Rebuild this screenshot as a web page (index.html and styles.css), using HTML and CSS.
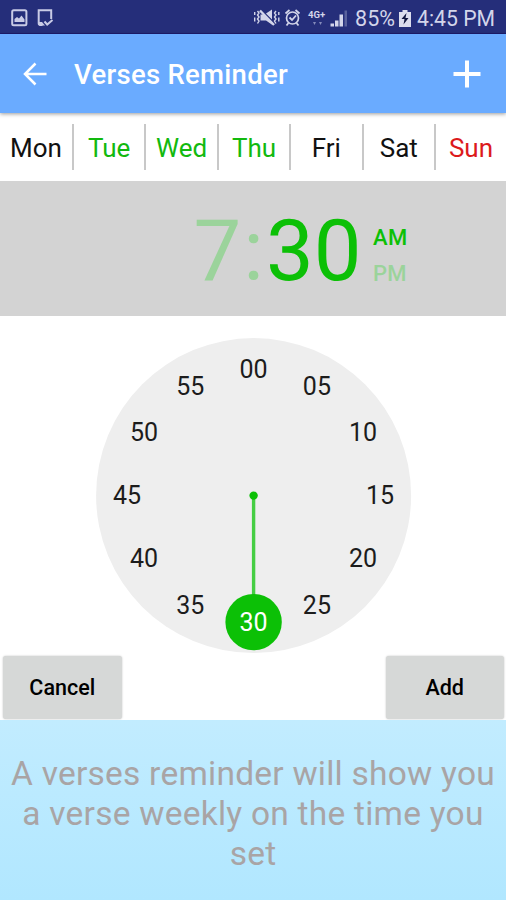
FILE: index.html
```html
<!DOCTYPE html>
<html lang="en">
<head>
<meta charset="utf-8">
<title>Verses Reminder</title>
<link rel="stylesheet" href="styles.css">
</head>
<body>
<div class="screen">
  <div class="status">
    <svg class="status-left" width="60" height="34" viewBox="0 0 60 34">
      <rect x="12.2" y="10.2" width="14.2" height="15" rx="1.5" fill="none" stroke="#c9cbe6" stroke-width="2"/>
      <path d="M14.5 22v-3l2.500-2 2 1.500 2.500-3 3 4V22z" fill="#c9cbe6"/>
      <path d="M42.500 25H40.200a1.500 1.500 0 0 1-1.500-1.500V10.200h12.500V19M44.500 21.500l2.700 3 5.300-4.500" fill="none" stroke="#c9cbe6" stroke-width="2"/>
      <path d="M39 22h3l3 3.500h-6z" fill="#c9cbe6"/>
    </svg>
    <div class="status-right">
      <svg width="104" height="34" viewBox="0 0 104 34">
        <g fill="none" stroke="#d3d5ea" stroke-width="1.400">
          <path d="M6.500 11l1.500 2-1.500 2 1.500 2-1.500 2 1.500 2-1.500 2.500M3.700 12v3M3.700 17.500v4M25 11l-1.500 2 1.500 2-1.500 2 1.500 2-1.500 2 1.500 2.500M27.800 12v3M27.800 17.500v4"/>
          <path d="M9 10.500L23 25" stroke-width="2.400"/>
          <circle cx="41.500" cy="18" r="6" stroke-width="1.700"/>
          <path d="M38.500 17.500l2.500 2.500 4-4.500M34.500 13.500l4-3.500M48.500 13.500l-4-3.500M37.500 23l-2 2.500M45.500 23l2 2.500" stroke-width="1.800"/>
        </g>
        <path d="M9.500 14.500h4l8 8v2.500l-6.500-4.500H9.500zM15 13.500l6-4v10z" fill="#d3d5ea"/>
        <text class="network" x="57" y="17.500">4G+</text>
        <path d="M62 22h3l-1.500 3zM68 22h3l-1.500 3z" fill="#858bbb"/>
        <path d="M79.500 26.500v-3h3.500v3zM84 26.500v-6h3.500v6zM88.500 26.500V14.500h3.500v12z" fill="#d3d5ea"/>
        <path d="M93.500 26.500V10.500h2.500v16z" fill="#59619c"/>
      </svg>
      <span class="battery-text">85%</span>
      <svg class="battery" width="12" height="17" viewBox="0 0 12 17">
        <path d="M3.500 0h5v2H12v15H0V2h3.500z" fill="#dcdded"/>
        <path d="M7.500 3L2.500 9h3l-1 5.500L9.500 8h-3z" fill="#11163f"/>
      </svg>
      <span class="clock-text">4:45 PM</span>
    </div>
  </div>

  <header class="bar">
    <svg class="back" width="24" height="24" viewBox="0 0 24 24"><path d="M23.500 12H2M12.500 1.500L2 12l10.500 10.500" fill="none" stroke="#fff" stroke-width="2.500"/></svg>
    <h1 class="title">Verses Reminder</h1>
    <svg class="plus" width="28" height="28" viewBox="0 0 28 28"><path d="M14 .5v27M.5 14h27" stroke="#fff" stroke-width="4"/></svg>
  </header>

  <nav class="days">
    <span class="day">Mon</span>
    <span class="day on">Tue</span>
    <span class="day on">Wed</span>
    <span class="day on">Thu</span>
    <span class="day">Fri</span>
    <span class="day">Sat</span>
    <span class="day sun">Sun</span>
  </nav>

  <section class="time">
    <span class="digits faded">7</span><span class="digits colon faded">:</span><span class="digits">30</span>
    <div class="ampm"><span>AM</span><span class="faded">PM</span></div>
  </section>

  <main class="dial">
    <svg width="317" height="317" viewBox="-.6 -.6 317 317">
      <circle cx="158" cy="158" r="157.500" fill="#eee"/>
      <path d="M158 158v110" stroke="#45ce43" stroke-width="3.400"/>
      <circle cx="158" cy="158" r="4.200" fill="#0cc006"/>
      <circle cx="158" cy="284.500" r="28.200" fill="#0cc006"/>
      <g class="numbers">
        <text x="158" y="40">00</text>
        <text x="221.300" y="57">05</text>
        <text x="267.500" y="103.300">10</text>
        <text x="284.500" y="166.500">15</text>
        <text x="267.500" y="229.800">20</text>
        <text x="221.300" y="276">25</text>
        <text x="158" y="293" class="selected">30</text>
        <text x="94.700" y="276">35</text>
        <text x="48.500" y="229.800">40</text>
        <text x="31.500" y="166.500">45</text>
        <text x="48.500" y="103.300">50</text>
        <text x="94.700" y="57">55</text>
      </g>
    </svg>
  </main>

  <div class="actions">
    <button class="btn">Cancel</button>
    <button class="btn">Add</button>
  </div>

  <p class="hint">A verses reminder will show you a verse weekly on the time you set</p>
</div>
</body>
</html>
```
FILE: styles.css
```css
* { box-sizing: border-box; }
body { margin: 0; background: #fff; font-family: Roboto, "Liberation Sans", sans-serif; }
.screen { width: 506px; height: 900px; display: flex; flex-direction: column; overflow: hidden; }

.status { height: 34px; flex: none; display: flex; justify-content: space-between; background: #252e7a; border-bottom: 1px solid #1d1c70; color: #d3d5ea; }
.status-right { display: flex; align-items: center; padding-right: 11px; font-size: 21.500px; line-height: 34px; white-space: nowrap; padding-top: 4px; }
.status-right > svg:first-child { margin-top: -3px; }
.network { font: bold 9.500px Roboto, sans-serif; fill: #d3d5ea; }
.battery { margin: 0 6px 0 4px; }
.clock-text { font-size: 21.200px; }

.bar { height: 79px; flex: none; display: flex; align-items: center; background: #6aabff; box-shadow: 0 1px 4px rgba(0, 0, 0, .4); padding: 0 25px 0 22.500px; z-index: 1; }
.title { margin: 2px 0 0 27.500px; flex: 1; color: #fff; font-size: 27.500px; font-weight: 500; line-height: 32px; letter-spacing: .28px; }

.days { height: 67.500px; flex: none; display: grid; grid-template-columns: 74px repeat(5, 72.400px) 1fr; padding: 11px 0; }
.day { display: flex; align-items: center; justify-content: center; border-right: 2px solid #c8c8c8; font-size: 26px; color: #111; padding-top: 2px; }
.day:last-child { border-right: 0; }
.day.on { color: #12b90e; }
.day.sun { color: #dc1a1c; }

.time { height: 135px; flex: none; display: flex; align-items: center; background: #d3d3d3; color: #0cc006; padding: 6px 0 0 193.500px; }
.digits { font-size: 85px; line-height: 100px; }
.colon { margin: 0 2px; }
.faded { color: #9bd39b; }
.ampm { display: flex; flex-direction: column; margin-left: 11.500px; font-size: 22px; font-weight: 500; line-height: 36px; padding-top: 9px; letter-spacing: .4px; }

.dial { height: 338.500px; flex: none; display: flex; justify-content: center; padding: 21.500px 0 0 1px; }
.numbers { font-size: 25px; text-anchor: middle; fill: #1c1c1c; }
.numbers .selected { fill: #fff; }

.actions { height: 66px; flex: none; display: flex; justify-content: space-between; padding: 2px 2px 1px 3px; }
.btn { width: 118.500px; height: 63px; border: 0; border-radius: 3px; background: #d6d8d7; box-shadow: 0 0 2px rgba(0, 0, 0, .25); font: 500 21.500px Roboto, "Liberation Sans", sans-serif; color: #000; padding: 0; }

.hint { flex: 1; margin: 0; padding: 34px 6px 0; text-align: center; font-size: 33.500px; line-height: 40px; letter-spacing: .24px; color: #a9a4a5; background: linear-gradient(#c2ecff, #b1e7ff); }
```
